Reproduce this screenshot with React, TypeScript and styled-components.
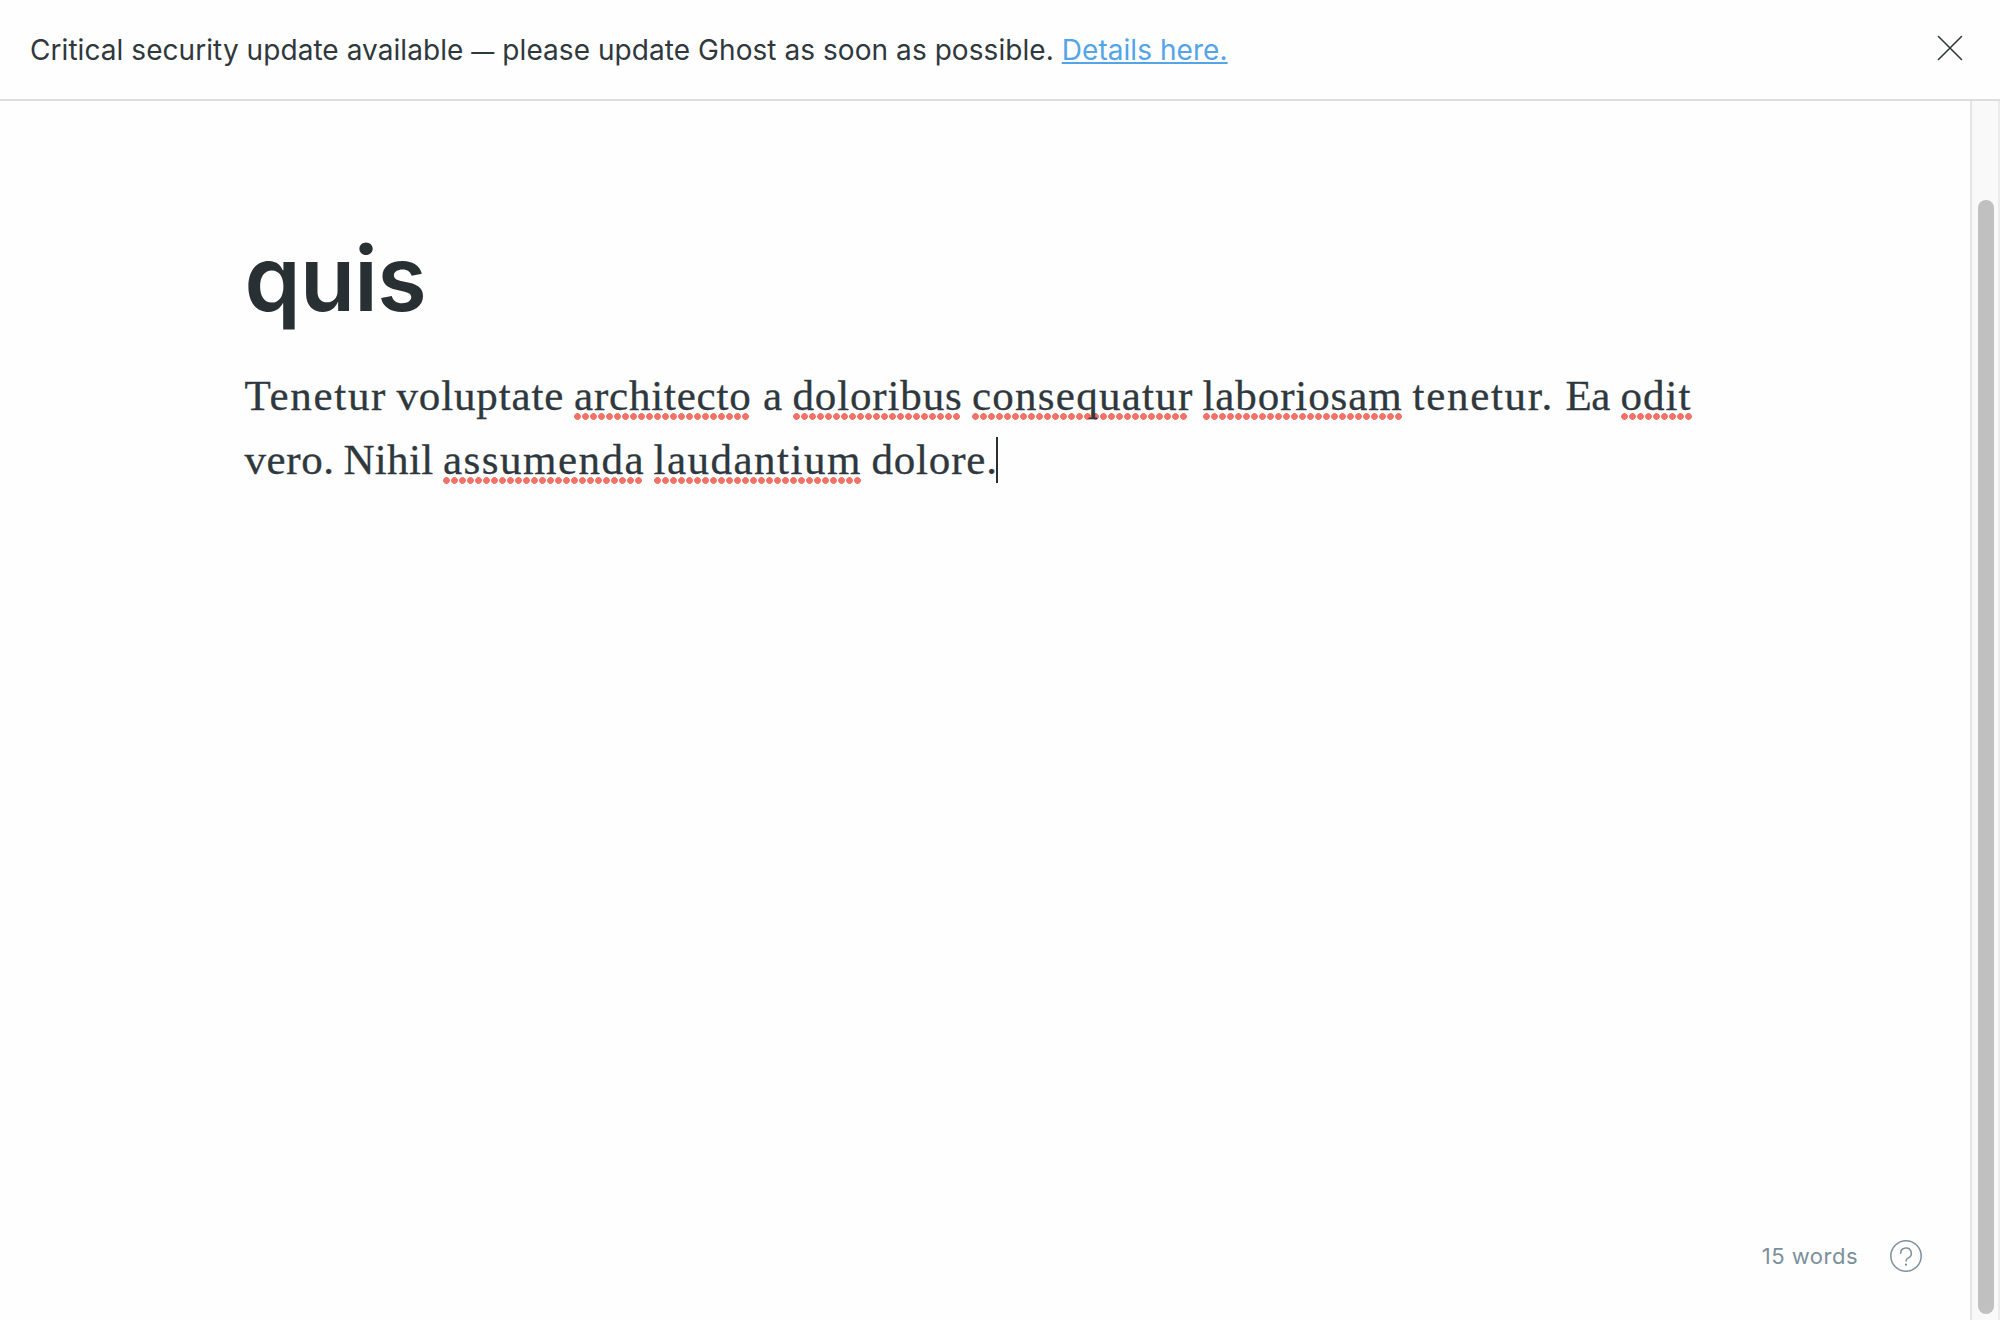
import React from "react";
import styled, { createGlobalStyle } from "styled-components";

const sans = `Inter, "Liberation Sans", sans-serif`;
const serif = `"Liberation Serif", serif`;

const GlobalStyle = createGlobalStyle`
  *, *::before, *::after { box-sizing: border-box; }
  body { margin: 0; background: #fefefe; }
`;

const Page = styled.div`
  display: flex;
  flex-direction: column;
  width: 2000px;
  height: 1320px;
  overflow: hidden;
  background: #fefefe;
  color: #2f383c;
  font-family: ${sans};
`;

const Banner = styled.header`
  display: flex;
  align-items: center;
  justify-content: space-between;
  flex: none;
  height: 101px;
  padding: 0 37px 4px 30px;
  border-bottom: 2px solid #dcdedd;
`;

const Message = styled.p`
  margin: 0;
  padding-top: 4px;
  font-size: 28px;
  line-height: 40px;
  letter-spacing: 0.06px;
  white-space: nowrap;
`;

const Dash = styled.span`
  font-size: 23px;
  line-height: 1;
`;

const DetailsLink = styled.a`
  color: #54a4e8;
  text-decoration: underline;
  text-decoration-thickness: 2px;
  text-underline-offset: 2px;
  text-decoration-skip-ink: none;
`;

const IconButton = styled.button`
  display: flex;
  padding: 0;
  border: 0;
  background: none;
  color: inherit;
`;

const Workspace = styled.div`
  display: flex;
  flex: 1;
  min-height: 0;
`;

const Editor = styled.main`
  display: flex;
  flex-direction: column;
  flex: 1;
  min-width: 0;
`;

const Article = styled.article`
  flex: 1;
  padding: 120px 0 0 244.5px;
`;

const Title = styled.h1`
  margin: 0;
  font-size: 90px;
  font-weight: 600;
  line-height: 116px;
  letter-spacing: -0.7px;
  color: #283033;
`;

const Body = styled.div`
  margin-top: 27px;
  font-family: ${serif};
  font-size: 43px;
  line-height: 64px;
  -webkit-text-stroke: 0.3px currentColor;
`;

const Line = styled.p`
  display: flex;
  margin: 0;
  height: 64px;
`;

const Word = styled.span<{ $advance: number; $tracking: number }>`
  flex: none;
  width: ${(p) => p.$advance}px;
  letter-spacing: ${(p) => p.$tracking}px;
  white-space: pre;
`;

const Misspelled = styled.span<{ $length: number }>`
  display: block;
  height: 64px;
  background: radial-gradient(circle at 3.5px 3.5px, #f27268 3px, transparent 3.7px) 0 48.5px / 8px 7px repeat-x;
  width: ${(p) => p.$length}px;
`;

const Caret = styled.span`
  flex: none;
  width: 2px;
  height: 46px;
  margin-top: 9px;
  background: #283033;
`;

const StatusBar = styled.footer`
  display: flex;
  align-items: center;
  justify-content: flex-end;
  gap: 32px;
  height: 32px;
  margin-bottom: 48px;
  padding-right: 48px;
  color: #7b909c;
`;

const WordCount = styled.span`
  font-size: 22px;
  line-height: 32px;
  letter-spacing: 0.5px;
`;

const ScrollTrack = styled.div`
  display: flex;
  justify-content: center;
  flex: none;
  width: 30px;
  padding: 99px 0 6px;
  border-left: 2px solid #e4e4e4;
  border-right: 2px solid #ebebeb;
  background: #f9f9f9;
`;

const ScrollThumb = styled.div`
  width: 16px;
  margin-left: 2px;
  border-radius: 8px;
  background: #c0c0c0;
`;

type Token = { text: string; advance: number; tracking: number; flagged?: number };

const lines: Token[][] = [
  [
    { text: "Tenetur", advance: 152, tracking: 1.7 },
    { text: "voluptate", advance: 177.5, tracking: 0.85 },
    { text: "architecto", advance: 189, tracking: 0.8, flagged: 175 },
    { text: "a", advance: 29.5, tracking: 0 },
    { text: "doloribus", advance: 179.5, tracking: 0.85, flagged: 167 },
    { text: "consequatur", advance: 230.5, tracking: 1.25, flagged: 215 },
    { text: "laboriosam", advance: 210, tracking: 0.9, flagged: 199 },
    { text: "tenetur.", advance: 153, tracking: 1.7 },
    { text: "Ea", advance: 55, tracking: -0.5 },
    { text: "odit", advance: 72, tracking: 1, flagged: 71 },
  ],
  [
    { text: "vero.", advance: 99, tracking: 0.6 },
    { text: "Nihil", advance: 99.5, tracking: 0.3 },
    { text: "assumenda", advance: 210.5, tracking: 1.5, flagged: 199 },
    { text: "laudantium", advance: 218, tracking: 1.5, flagged: 207 },
    { text: "dolore.", advance: 124.5, tracking: 0.8 },
  ],
];

const CloseIcon = () => (
  <svg width="26" height="26" viewBox="0 0 26 26" fill="none" stroke="currentColor" strokeWidth="1.6" strokeLinecap="round">
    <path d="M1.5 1.5 24.5 24.5M24.5 1.5 1.5 24.5" />
  </svg>
);

const HelpIcon = () => (
  <svg width="32" height="32" viewBox="0 0 32 32" fill="none" stroke="currentColor" strokeWidth="1.5" strokeLinecap="round">
    <circle cx="16" cy="16" r="15.2" />
    <path d="M10.7 13.2a5.3 5.3 0 1 1 7.4 4.9c-1.4.6-2.1 1.3-2.1 2.9" />
    <circle cx="16" cy="24.7" r="1.1" fill="currentColor" stroke="none" />
  </svg>
);

export default function App() {
  return (
    <Page>
      <GlobalStyle />
      <Banner>
        <Message>
          Critical security update available <Dash>—</Dash> please update Ghost as soon as possible.{" "}
          <DetailsLink>Details here.</DetailsLink>
        </Message>
        <IconButton aria-label="Close">
          <CloseIcon />
        </IconButton>
      </Banner>
      <Workspace>
        <Editor>
          <Article>
            <Title>quis</Title>
            <Body>
              {lines.map((line, i) => (
                <Line key={i}>
                  {line.map((t) => (
                    <Word key={t.text} $advance={t.advance} $tracking={t.tracking}>
                      {t.flagged ? <Misspelled $length={t.flagged}>{t.text}</Misspelled> : t.text}
                    </Word>
                  ))}
                  {i === lines.length - 1 && <Caret />}
                </Line>
              ))}
            </Body>
          </Article>
          <StatusBar>
            <WordCount>15 words</WordCount>
            <IconButton aria-label="Help">
              <HelpIcon />
            </IconButton>
          </StatusBar>
        </Editor>
        <ScrollTrack>
          <ScrollThumb />
        </ScrollTrack>
      </Workspace>
    </Page>
  );
}
